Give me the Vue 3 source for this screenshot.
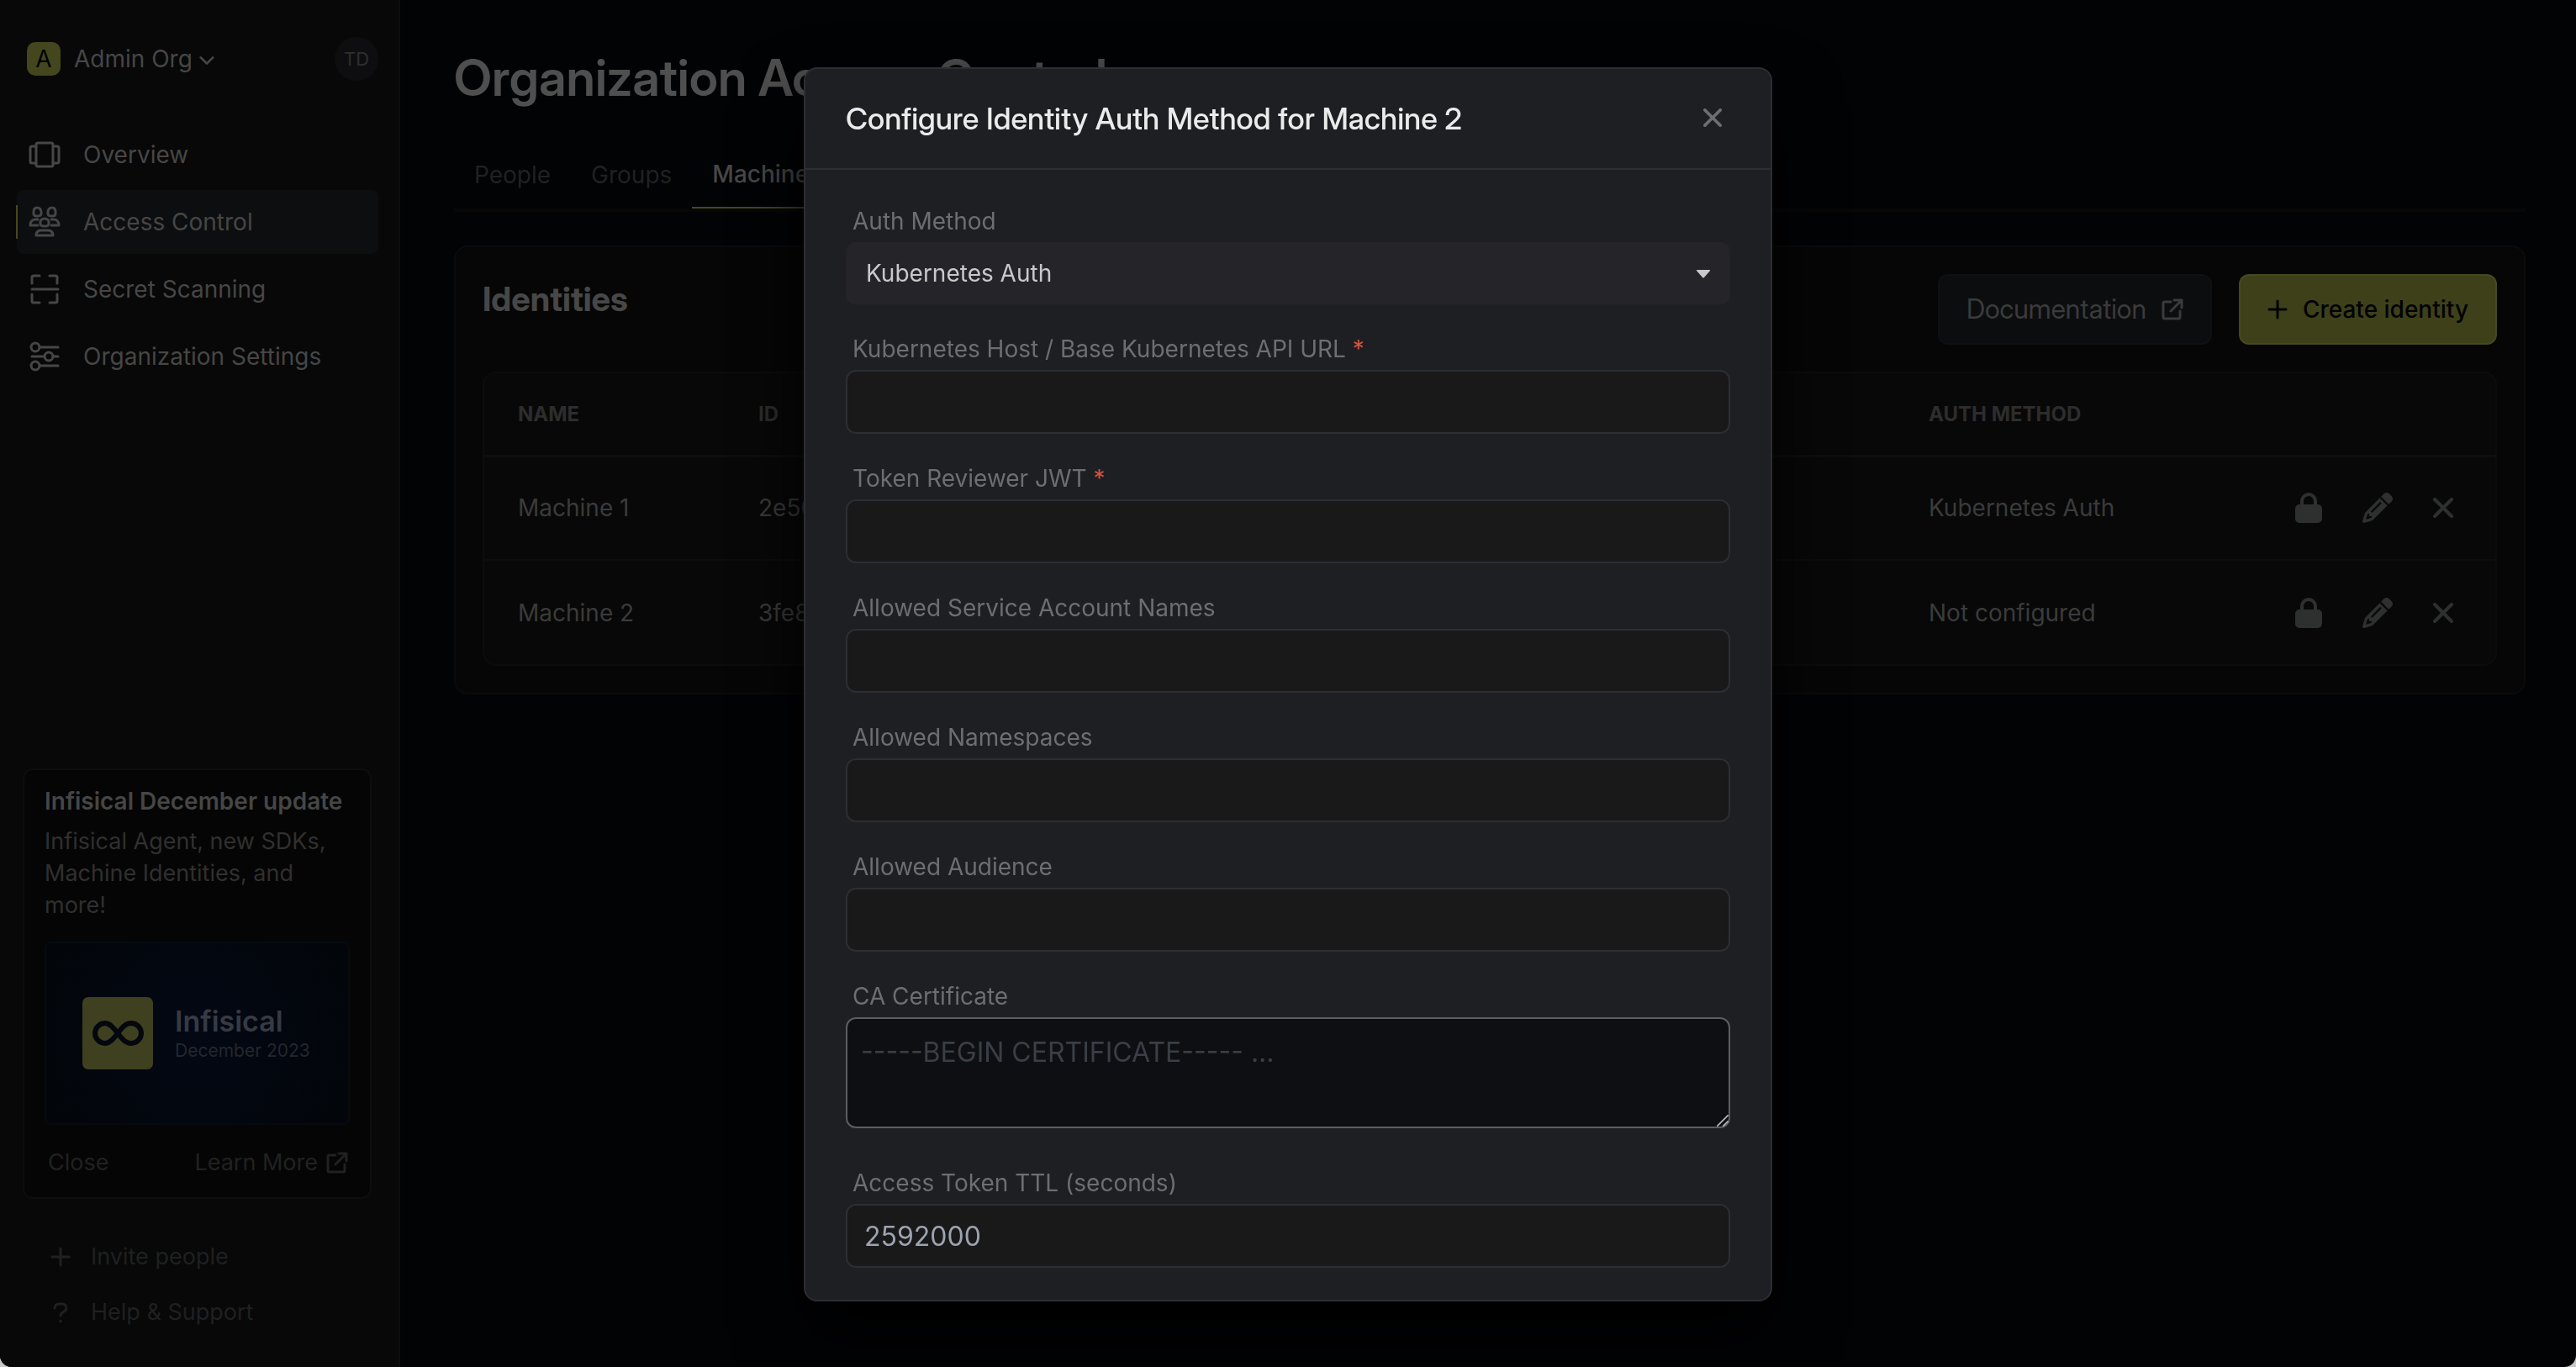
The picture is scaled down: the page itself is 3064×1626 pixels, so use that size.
<script setup>
import { ref } from 'vue'

const nav = [
  { label: 'Overview', icon: 'overview' },
  { label: 'Access Control', icon: 'people', active: true },
  { label: 'Secret Scanning', icon: 'scan' },
  { label: 'Organization Settings', icon: 'sliders' },
]

const identities = [
  { name: 'Machine 1', id: '2e50', method: 'Kubernetes Auth' },
  { name: 'Machine 2', id: '3fe8', method: 'Not configured' },
]

const fields = [
  { id: 'host', label: 'Kubernetes Host / Base Kubernetes API URL', required: true },
  { id: 'jwt', label: 'Token Reviewer JWT', required: true },
  { id: 'accounts', label: 'Allowed Service Account Names' },
  { id: 'namespaces', label: 'Allowed Namespaces' },
  { id: 'audience', label: 'Allowed Audience' },
]

const method = ref('Kubernetes Auth')
const ttl = ref('2592000')
</script>

<template>
  <div class="app">
    <aside class="sidebar">
      <div class="org">
        <span class="org-logo">A</span>
        <button class="org-name" type="button">
          Admin Org
          <svg class="chevron" viewBox="0 0 20 12"><path d="M2 2l8 8 8-8" /></svg>
        </button>
        <button class="avatar" type="button">TD</button>
      </div>

      <nav class="nav">
        <a v-for="item in nav" :key="item.label" href="#" class="nav-item" :class="{ active: item.active }">
          <svg v-if="item.icon === 'overview'" class="nav-icon" viewBox="0 0 36 36">
            <rect x="8" y="4" width="20" height="28" rx="2" />
            <path d="M8 8H3a2 2 0 0 0-2 2v16a2 2 0 0 0 2 2h5M28 8h5a2 2 0 0 1 2 2v16a2 2 0 0 1-2 2h-5" />
          </svg>
          <svg v-else-if="item.icon === 'people'" class="nav-icon" viewBox="0 0 36 36">
            <path d="M9 1c3 0 5 2 5 5v2c0 2-2 3-5 3-2 0-4-1-4-3V6c0-3 1-5 4-5zM27 1c3 0 4 2 4 5v2c0 2-2 3-4 3-3 0-5-1-5-3V6c0-3 2-5 5-5z" />
            <path d="M18 14c3 0 5 2 5 4v2c0 2-2 3-5 3s-5-1-5-3v-2c0-2 2-4 5-4zM10 15H7c-4 0-6 3-6 7h9M26 15h3c4 0 6 3 6 7H26" />
            <path d="M14 28h8c4 0 6 2 6 6H8c0-4 2-6 6-6z" />
          </svg>
          <svg v-else-if="item.icon === 'scan'" class="nav-icon" viewBox="0 0 36 36">
            <path d="M12 2H5a2 2 0 0 0-2 2v7M24 2h7a2 2 0 0 1 2 2v7M12 34H5a2 2 0 0 1-2-2v-8M24 34h7a2 2 0 0 0 2-2v-8M3 18h31" />
          </svg>
          <svg v-else class="nav-icon" viewBox="0 0 36 36">
            <circle cx="7" cy="7" r="5" /><circle cx="23" cy="18" r="5" /><circle cx="7" cy="29" r="5" />
            <path d="M12 7h22M3 18h15M28 18h6M12 29h22" />
          </svg>
          {{ item.label }}
        </a>
      </nav>

      <section class="news">
        <h2>Infisical December update</h2>
        <p>Infisical Agent, new SDKs, Machine Identities, and more!</p>
        <div class="banner">
          <svg class="banner-logo" viewBox="0 0 84 86">
            <rect width="84" height="86" rx="7" fill="#3f4020" />
            <path d="M42 43C36 35 32 31 27 31a12 12 0 0 0 0 24c5 0 9-4 15-12s10-12 16-12a12 12 0 0 1 0 24c-6 0-10-4-16-12z" fill="none" stroke="#04070e" stroke-width="6" />
          </svg>
          <div>
            <strong>Infisical</strong>
            <small>December 2023</small>
          </div>
        </div>
        <div class="news-actions">
          <button type="button">Close</button>
          <a href="#">
            Learn More
            <svg class="external" viewBox="0 0 26 26"><path d="M11 4H4a2 2 0 0 0-2 2v16a2 2 0 0 0 2 2h16a2 2 0 0 0 2-2v-7M15 2h9v9M24 2L11 15" /></svg>
          </a>
        </div>
      </section>

      <div class="footer-links">
        <button type="button">
          <svg viewBox="0 0 24 24"><path d="M12 2v20M2 12h20" /></svg>
          Invite people
        </button>
        <button type="button">
          <svg viewBox="0 0 24 24"><path d="M5 7c0-3 2-5 5-5h4c3 0 5 2 5 5 0 5-7 4-7 9" /><path d="M12 22v1" /></svg>
          Help &amp; Support
        </button>
      </div>
    </aside>

    <main class="main">
      <h1>Organization Access Control</h1>
      <div class="tabs" role="tablist">
        <button type="button" role="tab">People</button>
        <button type="button" role="tab">Groups</button>
        <button type="button" role="tab" class="selected" aria-selected="true">Machine Identities</button>
      </div>

      <section class="panel">
        <header class="panel-head">
          <h2>Identities</h2>
          <a class="btn docs" href="#">
            Documentation
            <svg class="external" viewBox="0 0 26 26"><path d="M11 4H4a2 2 0 0 0-2 2v16a2 2 0 0 0 2 2h16a2 2 0 0 0 2-2v-7M15 2h9v9M24 2L11 15" /></svg>
          </a>
          <button class="btn create" type="button">
            <svg class="plus" viewBox="0 0 24 24"><path d="M12 2v20M2 12h20" /></svg>
            Create identity
          </button>
        </header>

        <div class="table-wrap">
          <table>
            <thead>
              <tr>
                <th class="col-name">Name</th>
                <th>ID</th>
                <th class="col-method">Auth Method</th>
                <th class="col-actions"></th>
              </tr>
            </thead>
            <tbody>
              <tr v-for="row in identities" :key="row.name">
                <td>{{ row.name }}</td>
                <td>{{ row.id }}</td>
                <td>{{ row.method }}</td>
                <td>
                  <div class="actions">
                    <button type="button" aria-label="Auth method">
                      <svg class="lock" viewBox="0 0 32 36"><path fill-rule="evenodd" d="M6 14v-4a10 10 0 0 1 20 0v4h1a5 5 0 0 1 5 5v12a5 5 0 0 1-5 5H5a5 5 0 0 1-5-5V19a5 5 0 0 1 5-5zM10 14h12v-4a6 6 0 0 0-12 0z" /></svg>
                    </button>
                    <button type="button" aria-label="Edit">
                      <svg class="pencil" viewBox="0 0 512 512"><path d="M410.300 231l11.300-11.300-33.900-33.900-62.100-62.100L291.700 89.800l-11.300 11.300-22.600 22.600L58.600 322.900c-10.400 10.400-18 23.300-22.200 37.400L1 480.700c-2.500 8.400-.2 17.500 6.100 23.700s15.300 8.500 23.700 6.100l120.300-35.400c14.100-4.200 27-11.800 37.400-22.200L387.700 253.700 410.300 231zM160 399.400l-9.100 22.700c-4 3.100-8.500 5.400-13.300 6.900L59.400 452l23-78.100c1.400-4.900 3.800-9.400 6.900-13.300l22.700-9.100v32c0 8.800 7.200 16 16 16h32zM362.700 18.700L348.300 33.200 325.700 55.800 314.300 67.100l33.900 33.900 62.100 62.100 33.900 33.900 11.300-11.300 22.600-22.600 14.500-14.500c25-25 25-65.500 0-90.500L453.300 18.700c-25-25-65.500-25-90.500 0zm-47.400 168l-144 144c-6.200 6.200-16.400 6.200-22.600 0s-6.200-16.400 0-22.600l144-144c6.200-6.200 16.400-6.200 22.600 0s6.200 16.400 0 22.600z" /></svg>
                    </button>
                    <button type="button" aria-label="Delete">
                      <svg class="cross" viewBox="0 0 24 24"><path d="M2 2l20 20M22 2L2 22" /></svg>
                    </button>
                  </div>
                </td>
              </tr>
            </tbody>
          </table>
        </div>
      </section>
    </main>

    <div class="overlay">
      <div class="modal" role="dialog" aria-labelledby="modal-title">
        <header class="modal-head">
          <h2 id="modal-title">Configure Identity Auth Method for Machine 2</h2>
          <button type="button" aria-label="Close dialog">
            <svg class="cross" viewBox="0 0 24 24"><path d="M2 2l20 20M22 2L2 22" /></svg>
          </button>
        </header>
        <form class="modal-body" @submit.prevent>
          <div class="field">
            <label for="method">Auth Method</label>
            <div class="control">
              <select id="method" v-model="method">
                <option>Kubernetes Auth</option>
              </select>
              <svg class="caret" viewBox="0 0 18 12"><path d="M2 1h14q2 0 1 1l-7 8q-1 1-2 0L1 2q-1-1 1-1z" /></svg>
            </div>
          </div>
          <div v-for="field in fields" :key="field.id" class="field">
            <label :for="field.id">{{ field.label }} <span v-if="field.required" class="star">*</span></label>
            <input :id="field.id" type="text" />
          </div>
          <div class="field cert">
            <label for="cert">CA Certificate</label>
            <div class="control">
              <textarea id="cert" placeholder="-----BEGIN CERTIFICATE----- ..."></textarea>
              <svg class="grip" viewBox="0 0 16 16"><path d="M1 15L15 1M9 15l6-6" /></svg>
            </div>
          </div>
          <div class="field">
            <label for="ttl">Access Token TTL (seconds)</label>
            <input id="ttl" v-model="ttl" type="text" />
          </div>
        </form>
      </div>
    </div>
  </div>
</template>

<style>
body {
  margin: 0;
  background: #c8c8c8;
}
</style>

<style scoped>
* {
  box-sizing: border-box;
}
.app {
  display: flex;
  min-height: 100vh;
  overflow: hidden;
  border-radius: 0 0 14px 14px;
  background: #020305;
  color: #464646;
  font: 400 28px/42px Inter, sans-serif;
}
h1, h2, p {
  margin: 0;
}
button, input, select, textarea {
  margin: 0;
  font: inherit;
  color: inherit;
}
button {
  padding: 0;
  border: 0;
  background: none;
}
a {
  color: inherit;
  text-decoration: none;
}
svg {
  flex: none;
  fill: none;
  stroke: currentColor;
  stroke-width: 3;
  stroke-linecap: round;
  stroke-linejoin: round;
}

/* Sidebar */
.sidebar {
  display: flex;
  flex: none;
  flex-direction: column;
  width: 476px;
  padding: 44px 24px 44px 20px;
  border-right: 2px solid #0c0d0f;
  background: #080808;
}
.org {
  display: flex;
  align-items: center;
  margin-bottom: 50px;
  padding-left: 12px;
}
.org-logo {
  width: 40px;
  height: 40px;
  border-radius: 10px;
  background: #44471e;
  color: #020202;
  line-height: 40px;
  text-align: center;
}
.org-name {
  display: flex;
  align-items: center;
  gap: 8px;
  margin-left: 16px;
}
.chevron {
  width: 18px;
  height: 12px;
  margin-top: 4px;
}
.avatar {
  width: 52px;
  height: 52px;
  margin-left: auto;
  border-radius: 50%;
  background: #0e0e10;
  color: #2e2e2e;
  font-size: 22px;
}
.nav {
  display: flex;
  flex-direction: column;
  gap: 4px;
}
.nav-item {
  position: relative;
  display: flex;
  align-items: center;
  gap: 28px;
  height: 76px;
  padding-left: 15px;
  border-radius: 8px;
}
.nav-item.active {
  background: #0d0e10;
}
.nav-item.active::before {
  position: absolute;
  top: 18px;
  left: -1px;
  width: 2px;
  height: 40px;
  background: #46491b;
  content: '';
}
.nav-icon {
  width: 36px;
  height: 36px;
  overflow: visible;
}
.news {
  display: flex;
  flex-direction: column;
  margin: auto 8px 0 7px;
  padding: 16px 24px 20px;
  border: 2px solid #0c0d0e;
  border-radius: 12px;
  background: #050505;
}
.news h2 {
  margin-bottom: 8px;
  font-size: 28px;
  font-weight: 600;
  white-space: nowrap;
}
.news p {
  margin-bottom: 24px;
  color: #303030;
  font-size: 27px;
  line-height: 38px;
}
.banner {
  display: flex;
  align-items: center;
  gap: 26px;
  height: 218px;
  padding-left: 43px;
  border: 2px solid #060a10;
  border-radius: 8px;
  background: radial-gradient(circle, #030814, #020509);
  color: #373a42;
}
.banner-logo {
  width: 84px;
  height: 86px;
  stroke: none;
}
.banner strong, .banner small {
  display: block;
}
.banner strong {
  font-size: 34px;
  font-weight: 600;
}
.banner small {
  color: #24272e;
  font-size: 21px;
  line-height: 28px;
}
.news-actions {
  display: flex;
  justify-content: space-between;
  margin-top: 24px;
  padding: 0 2px 0 4px;
  color: #212121;
  font-size: 27px;
}
.news-actions a {
  display: flex;
  align-items: center;
  gap: 10px;
}
.external {
  width: 26px;
  height: 26px;
}
.footer-links {
  display: flex;
  flex-direction: column;
  gap: 24px;
  margin-top: 48px;
  padding-left: 40px;
  color: #1f2021;
  font-size: 27px;
}
.footer-links button {
  display: flex;
  align-items: center;
  gap: 24px;
}
.footer-links svg {
  width: 24px;
  height: 24px;
}

/* Page */
.main {
  flex: 1;
  min-width: 0;
  padding: 56px 60px 60px 64px;
}
h1, h2, .docs {
  font-family: "Inter Display", Inter, sans-serif;
}
.news h2 {
  font-family: Inter, sans-serif;
}
h1 {
  color: #4f4f4f;
  font-size: 60px;
  font-weight: 600;
  line-height: 72px;
}
.tabs {
  display: flex;
  margin-top: 40px;
  border-bottom: 4px solid #070707;
  color: #202122;
}
.tabs button {
  height: 80px;
  padding: 0 24px;
}
.tabs .selected {
  border-bottom: 2px solid #46491b;
  color: #484848;
  font-weight: 500;
}
.panel {
  margin-top: 40px;
  padding: 32px;
  border: 2px solid #0b0b0c;
  border-radius: 16px;
  background: #060606;
}
.panel-head {
  display: flex;
  align-items: flex-start;
  gap: 32px;
  margin-bottom: 32px;
}
.panel-head h2 {
  margin-right: auto;
  color: #474747;
  font-size: 40px;
  font-weight: 700;
  line-height: 60px;
}
.btn {
  display: flex;
  align-items: center;
  gap: 18px;
  height: 84px;
  padding: 0 32px;
  border: 2px solid #0f1012;
  border-radius: 12px;
}
.docs {
  background: #0c0d0f;
  color: #3b3b3b;
  font-size: 32px;
}
.create {
  border-color: #454920;
  background: #3e401a;
  color: #020202;
  font-weight: 500;
}
.plus {
  width: 24px;
  height: 24px;
}
.table-wrap {
  border: 2px solid #0c0c0c;
  border-radius: 16px;
  background: #080808;
}
table {
  width: 100%;
  border-collapse: collapse;
  table-layout: fixed;
  text-align: left;
}
th {
  height: 98px;
  padding: 2px 40px 0;
  border-bottom: 3px solid #0d0e0f;
  color: #2d2d2d;
  font-size: 24px;
  font-weight: 700;
  text-transform: uppercase;
}
td {
  height: 124px;
  padding: 0 40px;
  color: #3b3b3b;
}
tr + tr td {
  border-top: 2px solid #0d0d0d;
}
.col-name {
  width: 286px;
}
.col-method {
  width: 360px;
}
.col-actions {
  width: 354px;
}
.actions {
  display: flex;
  align-items: center;
  justify-content: flex-end;
  gap: 48px;
  padding-right: 10px;
  color: #2e2f2f;
}
.actions button {
  display: flex;
}
.lock, .pencil {
  height: 36px;
  fill: currentColor;
  stroke: none;
}
.lock {
  width: 32px;
}
.pencil {
  width: 36px;
}
.cross {
  width: 24px;
  height: 24px;
  stroke-width: 4;
}

/* Dialog */
.overlay {
  position: fixed;
  inset: 0;
  display: flex;
  align-items: center;
  justify-content: center;
  padding-top: 2px;
}
.modal {
  width: 1152px;
  max-width: 100%;
  border: 2px solid #2d2e32;
  border-radius: 16px;
  background: #1e1f23;
  box-shadow: 0 40px 80px #000;
  color: #6d6e71;
}
.modal-head {
  display: flex;
  align-items: center;
  justify-content: space-between;
  height: 120px;
  padding: 0 58px 0 48px;
  border-bottom: 2px solid #2d2e32;
}
.modal-head h2 {
  color: #ebebec;
  font-size: 36px;
  font-weight: 500;
}
.modal-head button {
  display: flex;
  padding-bottom: 2px;
}
.modal-head .cross {
  width: 22px;
  height: 22px;
}
.modal-body {
  display: flex;
  flex-direction: column;
  gap: 32px;
  padding: 40px 48px 38px;
}
.field {
  display: flex;
  flex-direction: column;
  gap: 4px;
}
.cert {
  padding-bottom: 12px;
}
label {
  padding-left: 8px;
}
.star {
  color: #cf5540;
}
input, textarea {
  width: 100%;
  border: 2px solid #2d2e32;
  border-radius: 12px;
  outline: none;
  background: #19191a;
  color: #9da3af;
  font-size: 32px;
}
input {
  height: 76px;
  padding: 0 20px;
}
.control {
  position: relative;
}
textarea {
  display: block;
  height: 132px;
  padding: 16px;
  border-color: #5c5d60;
  background: #0e0f12;
  line-height: 48px;
  resize: none;
}
textarea::placeholder {
  color: #3a3e46;
}
.grip {
  position: absolute;
  right: 2px;
  bottom: 2px;
  width: 14px;
  height: 14px;
  color: #b4b4b6;
  stroke-width: 2;
}
select {
  display: block;
  width: 100%;
  height: 74px;
  padding: 0 24px;
  border: 0;
  border-radius: 12px;
  outline: none;
  appearance: none;
  background: #252429;
  color: #c9c9ca;
}
.caret {
  position: absolute;
  top: 32px;
  right: 23px;
  width: 18px;
  height: 12px;
  fill: #c9c9ca;
  stroke: none;
}
</style>
